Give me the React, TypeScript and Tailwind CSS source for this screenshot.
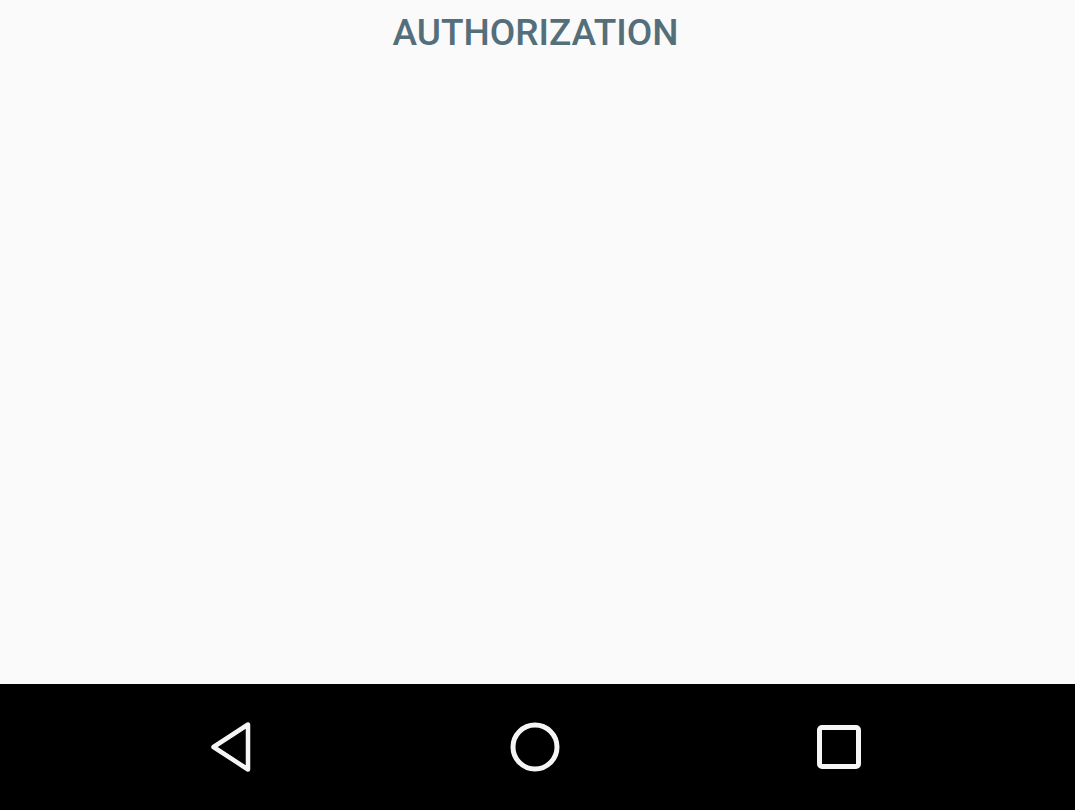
export default function App() {
  return (
    <div className="flex h-[810px] w-[1075px] flex-col bg-[#fafafa]">
      <main className="flex-1">
        <h1 className="pt-[11px] pr-[4px] text-center font-['Roboto',sans-serif] text-[37px] leading-[44px] font-medium text-[#546e7a]">
          AUTHORIZATION
        </h1>
      </main>

      {/* system nav bar */}
      <nav className="flex h-[126px] items-center bg-black">
        <div className="flex w-full items-center justify-center pr-[5px]">
          <div className="flex w-[304px] justify-center">
            <svg width="46" height="54" viewBox="0 0 46 54">
              <path
                d="M40 4.5 L40 49.5 L5.5 27 Z"
                fill="none"
                stroke="#f5f5f5"
                strokeWidth="4.5"
                strokeLinejoin="round"
              />
            </svg>
          </div>
          <div className="flex w-[304px] justify-center">
            <svg width="52" height="52" viewBox="0 0 52 52">
              <circle cx="26" cy="26" r="22" fill="none" stroke="#f5f5f5" strokeWidth="5" />
            </svg>
          </div>
          <div className="flex w-[304px] justify-center">
            <svg width="48" height="48" viewBox="0 0 48 48">
              <rect
                x="4.5"
                y="4.5"
                width="39"
                height="39"
                rx="2.5"
                fill="none"
                stroke="#f5f5f5"
                strokeWidth="5"
              />
            </svg>
          </div>
        </div>
      </nav>
    </div>
  );
}
